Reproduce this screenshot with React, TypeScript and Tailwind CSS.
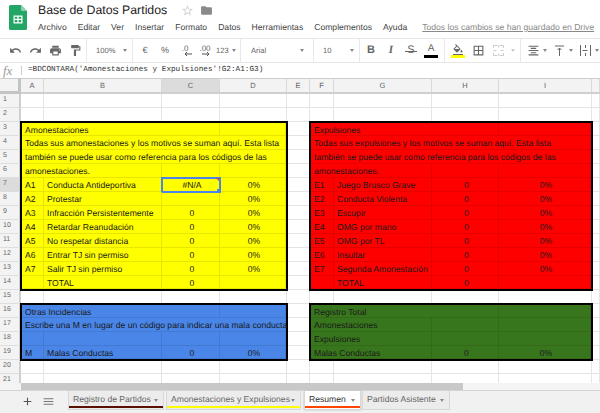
import React from "react";
import { MdUndo, MdRedo, MdPrint, MdFormatPaint, MdFormatColorFill, MdBorderAll, MdFormatAlignCenter, MdStarBorder, MdFolder, MdAdd, MdMenu } from "react-icons/md";

const cols = ["A", "B", "C", "D", "E", "F", "G", "H", "I", ""];
const rows = Array.from({ length: 21 }, (_, i) => i + 1);
const caret = <span className="shrink-0 w-0 h-0 border-x-[2.5px] border-x-transparent border-t-[3px] border-t-[#888]" />;
const lightCaret = <span className="shrink-0 w-0 h-0 border-x-[2.5px] border-x-transparent border-t-[3px] border-t-[#ccc]" />;

type C = { t?: string; span?: string; center?: boolean; sel?: boolean };
const r4 = (a: string, b: string, c: string, d: string): C[] => [{ t: a }, { t: b }, { t: c, center: true }, { t: d, center: true }];

function Panel({ pos, bg, line, tpl, data }: { pos: string; bg: string; line: string; tpl: string; data: C[][] }) {
  return (
    <div className={`${pos} z-10 -m-px border-2 border-black grid ${tpl} ${bg}`}>
      {data.flat().map((c, i) => (
        <div key={i} className={`relative min-w-0 whitespace-nowrap pl-[3px] pt-px text-[8.6px] leading-[12px] text-[#1a1a1a] border-r border-b ${line} ${c.span ?? ""} ${c.center ? "text-center" : ""} ${c.sel ? "outline-2 -outline-offset-1 outline-[#4a86e8]" : ""}`}>
          {c.t}
          {c.sel && <span className="absolute z-20 -right-[2px] -bottom-[2px] w-[4px] h-[4px] bg-[#4a86e8]" />}
          {c.sel && <span className="absolute z-20 right-0 top-0 w-0 h-0 border-l-[3px] border-l-transparent border-t-[3px] border-t-[#e33]" />}
        </div>
      ))}
    </div>
  );
}

const yellow: C[][] = [
  [{ t: "Amonestaciones", span: "col-span-3" }, {}],
  [{ t: "Todas sus amonestaciones y los motivos se suman aquí. Esta lista", span: "col-span-4" }],
  [{ t: "también se puede usar como referencia para los códigos de las", span: "col-span-4" }],
  [{ t: "amonestaciones.", span: "col-span-2" }, {}, {}],
  [{ t: "A1" }, { t: "Conducta Antideportiva" }, { t: "#N/A", center: true, sel: true }, { t: "0%", center: true }],
  r4("A2", "Protestar", "", "0%"),
  r4("A3", "Infracción Persistentemente", "0", "0%"),
  r4("A4", "Retardar Reanudación", "0", "0%"),
  r4("A5", "No respetar distancia", "0", "0%"),
  r4("A6", "Entrar TJ sin permiso", "0", "0%"),
  r4("A7", "Salir TJ sin permiso", "0", "0%"),
  r4("", "TOTAL", "0", ""),
];
const red: C[][] = [
  [{ t: "Expulsiones", span: "col-span-3" }, {}],
  [{ t: "Todas sus expulsiones y los motivos se suman aquí. Esta lista", span: "col-span-4" }],
  [{ t: "también se puede usar como referencia para los códigos de las", span: "col-span-4" }],
  [{ t: "amonestaciones.", span: "col-span-2" }, {}, {}],
  r4("E1", "Juego Brusco Grave", "0", "0%"),
  r4("E2", "Conducta Violenta", "0", "0%"),
  r4("E3", "Escupir", "0", "0%"),
  r4("E4", "OMG por mano", "0", "0%"),
  r4("E5", "OMG por TL", "0", "0%"),
  r4("E6", "Insultar", "0", "0%"),
  r4("E7", "Segunda Amonestación", "0", "0%"),
  r4("", "TOTAL", "0", ""),
];
const blue: C[][] = [
  [{ t: "Otras Incidencias", span: "col-span-3" }, {}],
  [{ t: "Escribe una M en lugar de un código para indicar una mala conducta", span: "col-span-4" }],
  [{}, {}, {}, {}],
  r4("M", "Malas Conductas", "0", "0%"),
];
const green: C[][] = [
  [{ t: "Registro Total", span: "col-span-3" }, {}],
  [{ t: "Amonestaciones", span: "col-span-2" }, {}, {}],
  [{ t: "Expulsiones", span: "col-span-2" }, {}, {}],
  [{ t: "Malas Conductas", span: "col-span-2" }, { t: "0", center: true }, { t: "0%", center: true }],
];

const Sep = () => <span className="shrink-0 w-px h-[23px] bg-[#e8e8e8]" />;
const Btn = ({ children }: { children: React.ReactNode }) => <span className="w-[20px] shrink-0 flex items-center justify-center">{children}</span>;

function Tab({ label, under, active, w }: { label: string; under?: string; active?: boolean; w: string }) {
  return (
    <div className={`${w} h-[19px] flex items-center justify-between pl-[4px] pr-[5px] border-x border-b border-[#d8d8d8] relative text-[8.6px] ${active ? "bg-white text-[#333] shadow-[0_0_2px_#bbb]" : "bg-[#ececec] text-[#666]"}`}>
      <span className="whitespace-nowrap -mt-[1px]">{label}</span>
      {caret}
      {under && <span className={`absolute left-0 right-0 bottom-[1px] h-[2px] ${under}`} />}
    </div>
  );
}

export default function App() {
  return (
    <div className="w-[600px] h-[413px] overflow-hidden flex flex-col bg-white font-['Liberation_Sans',Arial,sans-serif] [text-rendering:geometricPrecision]">
      <header className="h-[38px] shrink-0 flex">
        <div className="w-[38px] flex justify-center pt-[5px] pr-[3px]">
          <svg width="18" height="25" viewBox="0 0 18 25">
            <path d="M1.5 0H12l6 6v17.5a1.5 1.5 0 0 1-1.5 1.5h-15A1.5 1.5 0 0 1 0 23.5v-22A1.5 1.5 0 0 1 1.5 0z" fill="#23a566" />
            <path d="M12 0l6 6h-4.5A1.5 1.5 0 0 1 12 4.5z" fill="#8ed1b1" />
            <path d="M4.5 10.5h9v8h-9zM5.7 11.7v2h2.6v-2zm3.9 0v2h2.6v-2zM5.7 15v2.2h2.6V15zm3.9 0v2.2h2.6V15z" fill="#fff" fillRule="evenodd" />
          </svg>
        </div>
        <div className="flex-1 min-w-0">
          <div className="h-[20px] flex items-center text-[#222]">
            <span className="text-[12.3px]">Base de Datos Partidos</span>
            <MdStarBorder className="ml-[14px] text-[#d0d0d0]" size={13} />
            <MdFolder className="ml-[6px] text-[#8a8a8a]" size={13} />
          </div>
          <div className="h-[14px] flex items-center gap-[11px] text-[8.6px] text-[#444] whitespace-nowrap">
            <span>Archivo</span><span>Editar</span><span>Ver</span><span>Insertar</span><span>Formato</span><span>Datos</span><span>Herramientas</span><span>Complementos</span><span>Ayuda</span>
            <span className="ml-[4px] underline text-[#888]">Todos los cambios se han guardado en Drive</span>
          </div>
        </div>
      </header>

      <div className="h-[25px] shrink-0 flex items-center border-y border-[#e6e6e6] text-[#666] text-[7.6px] whitespace-nowrap">
        <div className="w-[86px] shrink-0 flex items-center pl-[5px]">
          <Btn><MdUndo size={13} /></Btn><Btn><MdRedo size={13} /></Btn><Btn><MdPrint size={13} /></Btn><Btn><MdFormatPaint size={13} /></Btn>
        </div>
        <Sep />
        <div className="w-[45px] shrink-0 flex items-center gap-[8px] pl-[9px]"><span>100%</span>{caret}</div>
        <Sep />
        <div className="w-[107px] shrink-0 flex items-center pl-[2px] text-[9px]">
          <Btn>€</Btn><Btn>%</Btn>
          <Btn><span className="relative text-[8px] -mt-[3px]">.0<svg className="absolute left-[2px] top-[9px]" width="8" height="4" viewBox="0 0 8 4"><path d="M8 2H1M3 0L1 2l2 2" fill="none" stroke="#555" /></svg></span></Btn>
          <Btn><span className="relative text-[8px] -mt-[3px]">.00<svg className="absolute left-[3px] top-[9px]" width="8" height="4" viewBox="0 0 8 4"><path d="M0 2h7M5 0l2 2-2 2" fill="none" stroke="#555" /></svg></span></Btn>
          <span className="flex items-center gap-[3px] text-[7.6px] ml-[1px]">123{caret}</span>
        </div>
        <Sep />
        <div className="w-[72px] shrink-0 flex items-center pl-[10px] pr-[9px] justify-between"><span>Arial</span>{caret}</div>
        <Sep />
        <div className="w-[45px] shrink-0 flex items-center pl-[9px] pr-[5px] justify-between"><span>10</span>{caret}</div>
        <Sep />
        <div className="w-[84px] shrink-0 flex items-center pl-[1px]">
          <Btn><span className="font-bold text-[11px]">B</span></Btn>
          <Btn><span className="italic font-bold font-['Liberation_Serif',serif] text-[11px]">I</span></Btn>
          <Btn><span className="relative text-[11px] leading-none">S<span className="absolute -left-[2px] -right-[2px] top-[6px] h-px bg-[#666]" /></span></Btn>
          <Btn><span className="flex flex-col items-center text-[10px] leading-[10px] -mb-[1px]">A<span className="w-[14px] h-[3px] mt-[1px] bg-black" /></span></Btn>
        </div>
        <Sep />
        <div className="w-[75px] shrink-0 flex items-center gap-[3px] pl-[3px]">
          <span className="flex">
            <Btn><span className="flex flex-col items-center"><MdFormatColorFill size={12} className="-mb-[1px]" /><span className="w-[14px] h-[3px] bg-[#ffff00]" /></span></Btn>
            <Btn><MdBorderAll size={13} /></Btn>
            <Btn><svg width="11" height="11" viewBox="0 0 11 11" fill="none" stroke="#ccc"><path d="M.5 3V.5h4M6.5.5h4V3M.5 8v2.5h4M6.5 10.5h4V8M.5 5.5h3M7.5 5.5h3M5.5.5v2M5.5 8.5v2" /></svg></Btn>
          </span>
          {lightCaret}
        </div>
        <Sep />
        <div className="flex items-center pl-[2px]">
          <Btn><MdFormatAlignCenter size={13} /></Btn>{caret}
          <span className="w-[2px]" />
          <Btn><svg width="11" height="11" viewBox="0 0 11 11" fill="none" stroke="#666"><path d="M1 1h9M5.5 11V3M3.5 5l2-2 2 2" /></svg></Btn>{caret}
          <span className="w-[2px]" />
          <Btn><svg width="11" height="11" viewBox="0 0 11 11" fill="none" stroke="#666"><path d="M.5 0v11M10.5 0v11M5.5 0v3M5.5 5v1M5.5 8v3M2.5 5.5h5" /></svg></Btn>{caret}
        </div>
      </div>

      <div className="h-[15px] shrink-0 flex items-center text-[#666]">
        <span className="w-[21px] pl-[3px] italic font-['Liberation_Serif',serif] text-[13px] text-[#999]">fx</span>
        <span className="w-px h-[9px] bg-[#ccc]" />
        <span className="pl-[6px] font-['Liberation_Mono',monospace] text-[7.7px] text-[#333]">=BDCONTARA('Amonestaciones y Expulsiones'!G2:A1:G3)</span>
      </div>

      <div className="flex-1 min-h-0 overflow-hidden grid grid-cols-[21px_23px_118px_58px_67px_23px_24px_98px_67px_93px_8px] grid-rows-[16px_repeat(21,14px)]">
        <div className="col-start-1 row-start-1 bg-[#f3f3f3] border-r-[3px] border-b-[3px] border-[#c4c4c4] border-t border-t-[#ccc]" />
        {cols.map((c, i) => (
          <div key={c + i} style={{ gridRow: 1, gridColumn: i + 2 }} className={`flex items-center justify-center text-[7.5px] text-[#666] border-t border-r border-b-2 border-t-[#ccc] border-r-[#d8d8d8] border-b-[#cfcfcf] ${c === "C" ? "bg-[#dcdcdc]" : "bg-[#f3f3f3]"}`}>{c}</div>
        ))}
        {rows.map((n) => (
          <React.Fragment key={n}>
            <div style={{ gridRow: n + 1, gridColumn: 1 }} className={`flex items-center pl-[3px] text-[7px] text-[#666] border-r-2 border-b border-r-[#cfcfcf] border-b-[#dedede] ${n === 7 ? "bg-[#dcdcdc]" : "bg-[#f3f3f3]"}`}>{n}</div>
            {cols.map((c, i) => (
              <div key={i} style={{ gridRow: n + 1, gridColumn: i + 2 }} className="border-r border-b border-[#e4e4e4]" />
            ))}
          </React.Fragment>
        ))}
        <Panel pos="col-[2/6] row-[4/16]" bg="bg-[#ffff00]" line="border-[#e6e600]" tpl="grid-cols-[22px_118px_58px_66px] grid-rows-[13px_repeat(10,14px)_13px]" data={yellow} />
        <Panel pos="col-[7/11] row-[4/16]" bg="bg-[#ff0000]" line="border-[#e60000]" tpl="grid-cols-[23px_98px_67px_92px] grid-rows-[13px_repeat(10,14px)_13px]" data={red} />
        <Panel pos="col-[2/6] row-[17/21]" bg="bg-[#4a86e8]" line="border-[#4279d2]" tpl="grid-cols-[22px_118px_58px_66px] grid-rows-[13px_14px_14px_13px]" data={blue} />
        <Panel pos="col-[7/11] row-[17/21]" bg="bg-[#38761d]" line="border-[#326a1a]" tpl="grid-cols-[23px_98px_67px_92px] grid-rows-[13px_14px_14px_13px]" data={green} />
      </div>

      <div className="h-[8px] shrink-0 flex bg-[#f4f4f4] border-b border-[#d4d4d4]">
        <div className="w-[21px]" />
        <div className="w-[442px] bg-[#c8c8c8]" />
      </div>

      <div className="h-[22px] shrink-0 flex items-start bg-[#f1f1f1] pl-[21px] text-[#555]">
        <div className="w-[47px] h-[20px] flex items-center gap-[8px]">
          <MdAdd size={13} className="text-[#555]" /><MdMenu size={13} className="text-[#777]" />
        </div>
        <Tab label="Registro de Partidos" w="w-[96px]" under="bg-[#5b0f00]" />
        <div className="w-[2px]" />
        <Tab label="Amonestaciones y Expulsiones" w="w-[135px]" under="bg-[#ffff00]" />
        <div className="w-[3px]" />
        <Tab label="Resumen" w="w-[57px]" under="bg-[#ff4500]" active />
        <div className="w-[1px]" />
        <Tab label="Partidos Asistente" w="w-[88px]" />
      </div>
    </div>
  );
}
